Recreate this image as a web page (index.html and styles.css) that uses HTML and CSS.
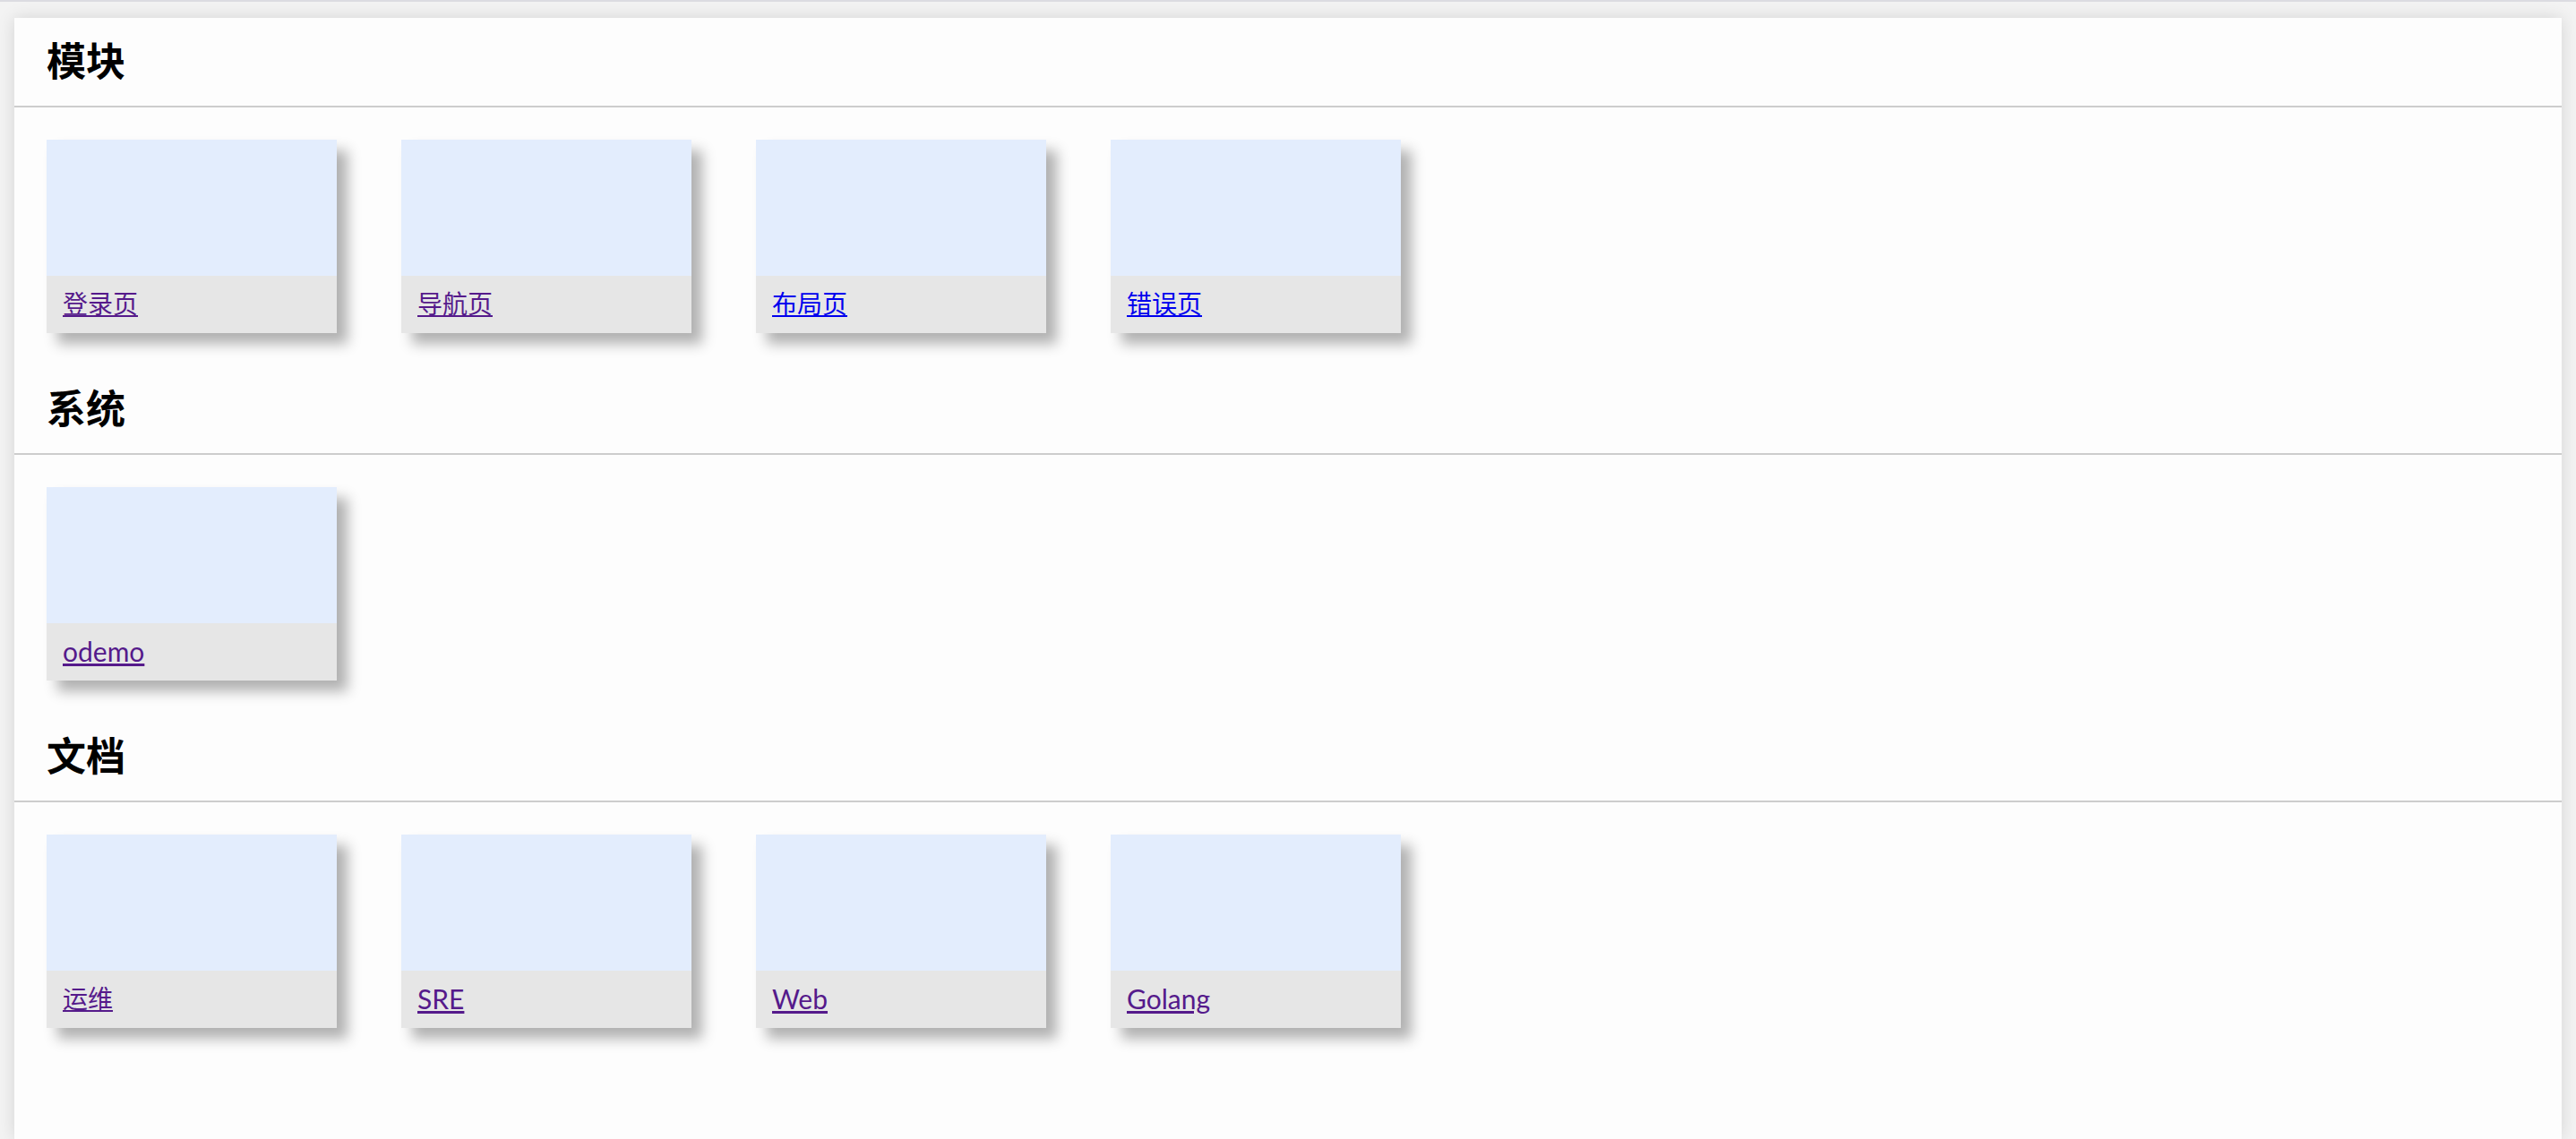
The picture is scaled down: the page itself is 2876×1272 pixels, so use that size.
FILE: index.html
```html
<!DOCTYPE html>
<html lang="zh-CN">
<head>
<meta charset="utf-8">
<title>导航</title>
<link rel="stylesheet" href="styles.css">
</head>
<body>
<div class="topbar"></div>
<main class="panel">
  <section class="group">
    <h2 class="group-title">模块</h2>
    <div class="cards">
      <div class="card"><div class="card-thumb"></div><div class="card-foot"><a class="card-link visited" href="#">登录页</a></div></div>
      <div class="card"><div class="card-thumb"></div><div class="card-foot"><a class="card-link visited" href="#">导航页</a></div></div>
      <div class="card"><div class="card-thumb"></div><div class="card-foot"><a class="card-link" href="#">布局页</a></div></div>
      <div class="card"><div class="card-thumb"></div><div class="card-foot"><a class="card-link" href="#">错误页</a></div></div>
    </div>
  </section>
  <section class="group">
    <h2 class="group-title">系统</h2>
    <div class="cards">
      <div class="card"><div class="card-thumb"></div><div class="card-foot"><a class="card-link visited latin" href="#">odemo</a></div></div>
    </div>
  </section>
  <section class="group">
    <h2 class="group-title">文档</h2>
    <div class="cards">
      <div class="card"><div class="card-thumb"></div><div class="card-foot"><a class="card-link visited" href="#">运维</a></div></div>
      <div class="card"><div class="card-thumb"></div><div class="card-foot"><a class="card-link visited latin" href="#">SRE</a></div></div>
      <div class="card"><div class="card-thumb"></div><div class="card-foot"><a class="card-link visited latin" href="#">Web</a></div></div>
      <div class="card"><div class="card-thumb"></div><div class="card-foot"><a class="card-link visited latin" href="#">Golang</a></div></div>
    </div>
  </section>
</main>
</body>
</html>
```

FILE: styles.css
```css
html, body {
  margin: 0;
  padding: 0;
}
body {
  background: #f3f3f3;
  font-family: Lato, "Noto Sans CJK SC", sans-serif;
  height: 100vh;
  overflow: hidden;
  display: flex;
  flex-direction: column;
}
.topbar {
  height: 2px;
  background: #dcdce1;
  flex: none;
}
.panel {
  margin: 18px 16px 0;
  flex: 1;
  background: #fdfdfd;
  box-shadow: 0 0 18px rgba(0, 0, 0, 0.13);
}
.group-title {
  margin: 0;
  padding: 14px 36px 20px;
  font-family: "Noto Sans CJK SC", sans-serif;
  font-weight: 700;
  font-size: 44px;
  line-height: 64px;
  color: #000;
  border-bottom: 2px solid #cdcdcd;
}
.cards {
  display: flex;
  gap: 72px;
  padding: 36px 36px 36px;
}
.card {
  width: 324px;
  height: 216px;
  display: flex;
  flex-direction: column;
  box-shadow: 12px 12px 14px rgba(0, 0, 0, 0.3);
}
.card-thumb {
  height: 152px;
  background: #e3edfd;
}
.card-foot {
  flex: 1;
  background: #e6e6e6;
  display: flex;
  align-items: center;
  padding: 0 0 3px 18px;
}
.card-link {
  font-size: 28px;
  line-height: 36px;
  color: #0000ee;
  text-decoration: underline;
}
.card-link.latin {
  font-size: 30px;
}
.card-link.visited {
  color: #551a8b;
}
```
